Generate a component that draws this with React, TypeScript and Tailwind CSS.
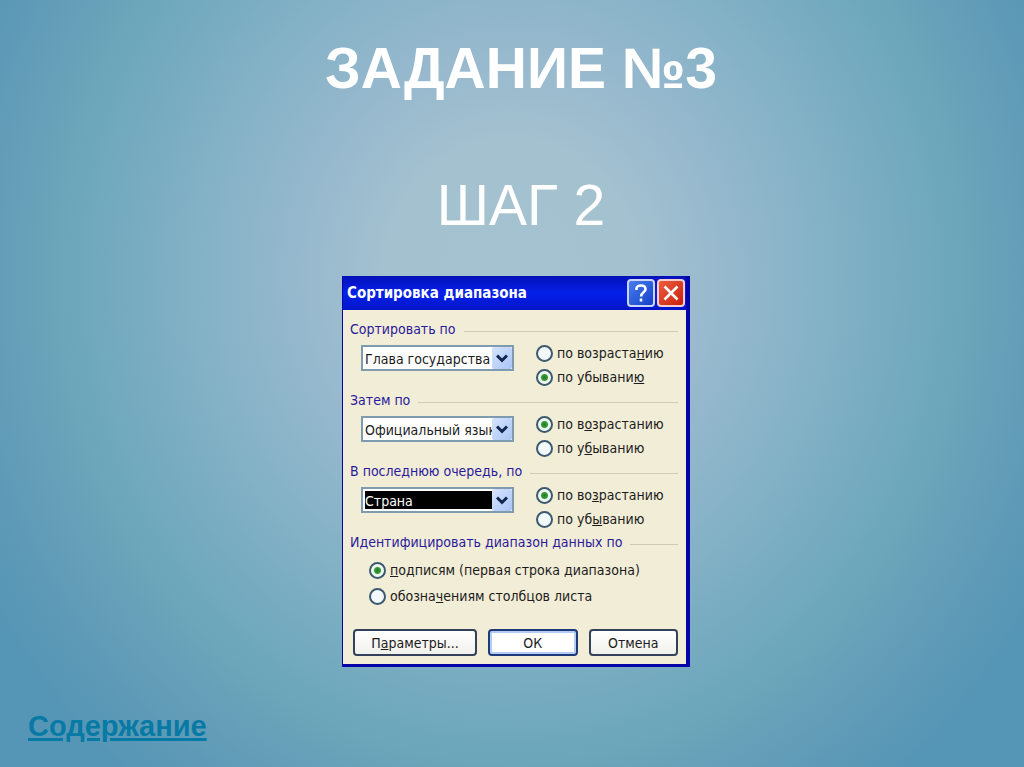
import React, { useState } from 'react'

type SortLevel = {
  id: string
  title: string
  value: string
  options: string[]
  direction: 'asc' | 'desc'
  asc: React.ReactNode
  desc: React.ReactNode
  active?: boolean
}

const columns = ['Глава государства', 'Официальный язык', 'Страна']

const levels: SortLevel[] = [
  {
    id: 'first',
    title: 'Сортировать по',
    value: 'Глава государства',
    options: columns,
    direction: 'desc',
    asc: <>по возраста<u>н</u>ию</>,
    desc: <>по убывани<u>ю</u></>,
  },
  {
    id: 'second',
    title: 'Затем по',
    value: 'Официальный язык',
    options: columns,
    direction: 'asc',
    asc: <>по в<u>о</u>зрастанию</>,
    desc: <>по у<u>б</u>ыванию</>,
  },
  {
    id: 'third',
    title: 'В последнюю очередь, по',
    value: 'Страна',
    options: columns,
    direction: 'asc',
    asc: <>по во<u>з</u>растанию</>,
    desc: <>по уб<u>ы</u>ванию</>,
    active: true,
  },
]

function GroupTitle({ children }: { children: React.ReactNode }) {
  return (
    <legend className="flex h-4 w-full items-center gap-2 whitespace-nowrap leading-4 text-[#2a1a9c]">
      {children}
      <span className="mt-1 h-px flex-1 bg-[#cfcbb8]" />
    </legend>
  )
}

type RadioProps = {
  name: string
  value: string
  checked?: boolean
  className: string
  children: React.ReactNode
}

function Radio({ name, value, checked, className, children }: RadioProps) {
  return (
    <label className={`flex items-center gap-1 whitespace-nowrap ${className}`}>
      <input
        type="radio"
        name={name}
        value={value}
        defaultChecked={checked}
        className="h-[17px] w-[17px] shrink-0 appearance-none rounded-full border-2 border-[#3b5a70] bg-[#f3f8fb] checked:bg-[radial-gradient(circle,#1f7a24_0,#3a9c3c_3px,#e6f4e6_4px,#f6fbf6_6px)]"
      />
      <span>{children}</span>
    </label>
  )
}

function ColumnSelect({ level }: { level: SortLevel }) {
  const [value, setValue] = useState(level.value)

  return (
    <div className="relative mt-1 h-[26px] w-[153px] shrink-0 border-2 border-[#7f9bb0] bg-white">
      <select
        aria-label={level.title}
        value={value}
        onChange={(e) => setValue(e.target.value)}
        className={`block h-full w-full appearance-none bg-clip-content py-[2px] pl-[2px] pr-5 outline-none ${
          level.active ? 'bg-black text-white' : 'bg-white text-[#1c1c1c]'
        }`}
      >
        {level.options.map((option) => (
          <option key={option}>{option}</option>
        ))}
      </select>
      <span className="pointer-events-none absolute inset-y-0 right-0 flex w-5 items-center justify-center rounded-xs bg-linear-to-br from-[#d6e4fd] to-[#a9c5f5]">
        <svg viewBox="0 0 12 9" className="h-[9px] w-3" fill="none" stroke="#12244f" strokeWidth="3">
          <path d="M1 1.5 6 6.5 11 1.5" />
        </svg>
      </span>
    </div>
  )
}

function SortDialog() {
  return (
    <form
      role="dialog"
      aria-labelledby="dialog-title"
      onSubmit={(e) => e.preventDefault()}
      className="w-[348px] border-r-4 border-b-3 border-l border-[#0404a8] bg-[#f2edd7] font-['DejaVu_Sans_Condensed','DejaVu_Sans',sans-serif] text-sm text-[#1c1c1c]"
    >
      <div className="flex h-[34px] items-center gap-[2px] bg-linear-to-b from-[#0510b8] via-[#0420ea] to-[#0414c8] pr-px pl-1">
        <h3 id="dialog-title" className="flex-1 pt-px text-[15px] font-bold whitespace-nowrap text-white">
          Сортировка диапазона
        </h3>
        <button
          type="button"
          aria-label="Справка"
          className="flex h-7 w-7 items-center justify-center rounded-sm border-2 border-[#c9d6f8] bg-linear-to-br from-[#4a7cf0] to-[#1440c8]"
        >
          <svg viewBox="0 0 20 20" className="h-5 w-5" fill="none" stroke="white" strokeWidth="2.6">
            <path d="M5.5 7V5.5C5.5 3.5 7.5 2.5 10 2.5s4.5 1.2 4.5 3.7c0 3.3-4.4 3-4.4 7.3" />
            <path d="M10 15.5v3" />
          </svg>
        </button>
        <button
          type="button"
          aria-label="Закрыть"
          className="flex h-7 w-7 items-center justify-center rounded-sm border-2 border-[#f3cfd0] bg-linear-to-br from-[#ee5a3c] to-[#c81c08]"
        >
          <svg viewBox="0 0 20 20" className="h-5 w-5" fill="none" stroke="white" strokeWidth="2.6">
            <path d="M3.5 3.5l13 13M16.5 3.5l-13 13" />
          </svg>
        </button>
      </div>

      <div className="pt-[11px] pr-2 pb-2 pl-[7px]">
        {levels.map((level) => (
          <fieldset key={level.id} className="pb-[3px]">
            <GroupTitle>{level.title}</GroupTitle>
            <div className="flex gap-[22px] pt-1 pl-[11px]">
              <ColumnSelect level={level} />
              <div>
                <Radio name={level.id} value="asc" checked={level.direction === 'asc'} className="h-6">
                  {level.asc}
                </Radio>
                <Radio name={level.id} value="desc" checked={level.direction === 'desc'} className="h-6">
                  {level.desc}
                </Radio>
              </div>
            </div>
          </fieldset>
        ))}

        <fieldset>
          <GroupTitle>Идентифицировать диапазон данных по</GroupTitle>
          <div className="pt-[7px] pl-[19px]">
            <Radio name="header" value="labels" checked className="h-[26px]">
              <u>п</u>одписям (первая строка диапазона)
            </Radio>
            <Radio name="header" value="columns" className="h-[26px]">
              обозна<u>ч</u>ениям столбцов листа
            </Radio>
          </div>
        </fieldset>

        <div className="mt-5 flex gap-[11px] pl-[3px]">
          <button type="button" className="h-[27px] w-[124px] rounded-sm border-2 border-[#33415c] bg-linear-to-b from-white to-[#f1f1ec]">
            П<u>а</u>раметры...
          </button>
          <button type="submit" className="h-[27px] flex-1 rounded-sm border-2 border-[#1f3a78] bg-white inset-ring-2 inset-ring-[#b4cdf5]">
            ОК
          </button>
          <button type="button" className="h-[27px] flex-1 rounded-sm border-2 border-[#33415c] bg-linear-to-b from-white to-[#f1f1ec]">
            Отмена
          </button>
        </div>
      </div>
    </form>
  )
}

export default function App() {
  return (
    <main className="flex min-h-screen flex-col justify-between bg-[radial-gradient(ellipse_62%_89%_at_50%_36%,#a4c2cf_0%,#a3c1cf_20%,#98b9ce_32%,#88b3c8_46%,#6ba6ba_71%,#639db8_81%,#5595b5_96%)] font-['Liberation_Sans',Arial,sans-serif]">
      <div className="flex flex-col items-center pt-9">
        <h1 className="pl-[18px] text-[57px] leading-16 font-bold text-white">ЗАДАНИЕ №3</h1>
        <h2 className="mt-[73px] mb-[39px] pl-[18px] text-[57px] leading-16 text-white">ШАГ 2</h2>
        <div className="pl-2">
          <SortDialog />
        </div>
      </div>
      <footer className="px-7 pb-6">
        <a href="#contents" className="text-[29px] leading-8 font-bold text-[#067aa5] underline decoration-3">
          Содержание
        </a>
      </footer>
    </main>
  )
}
